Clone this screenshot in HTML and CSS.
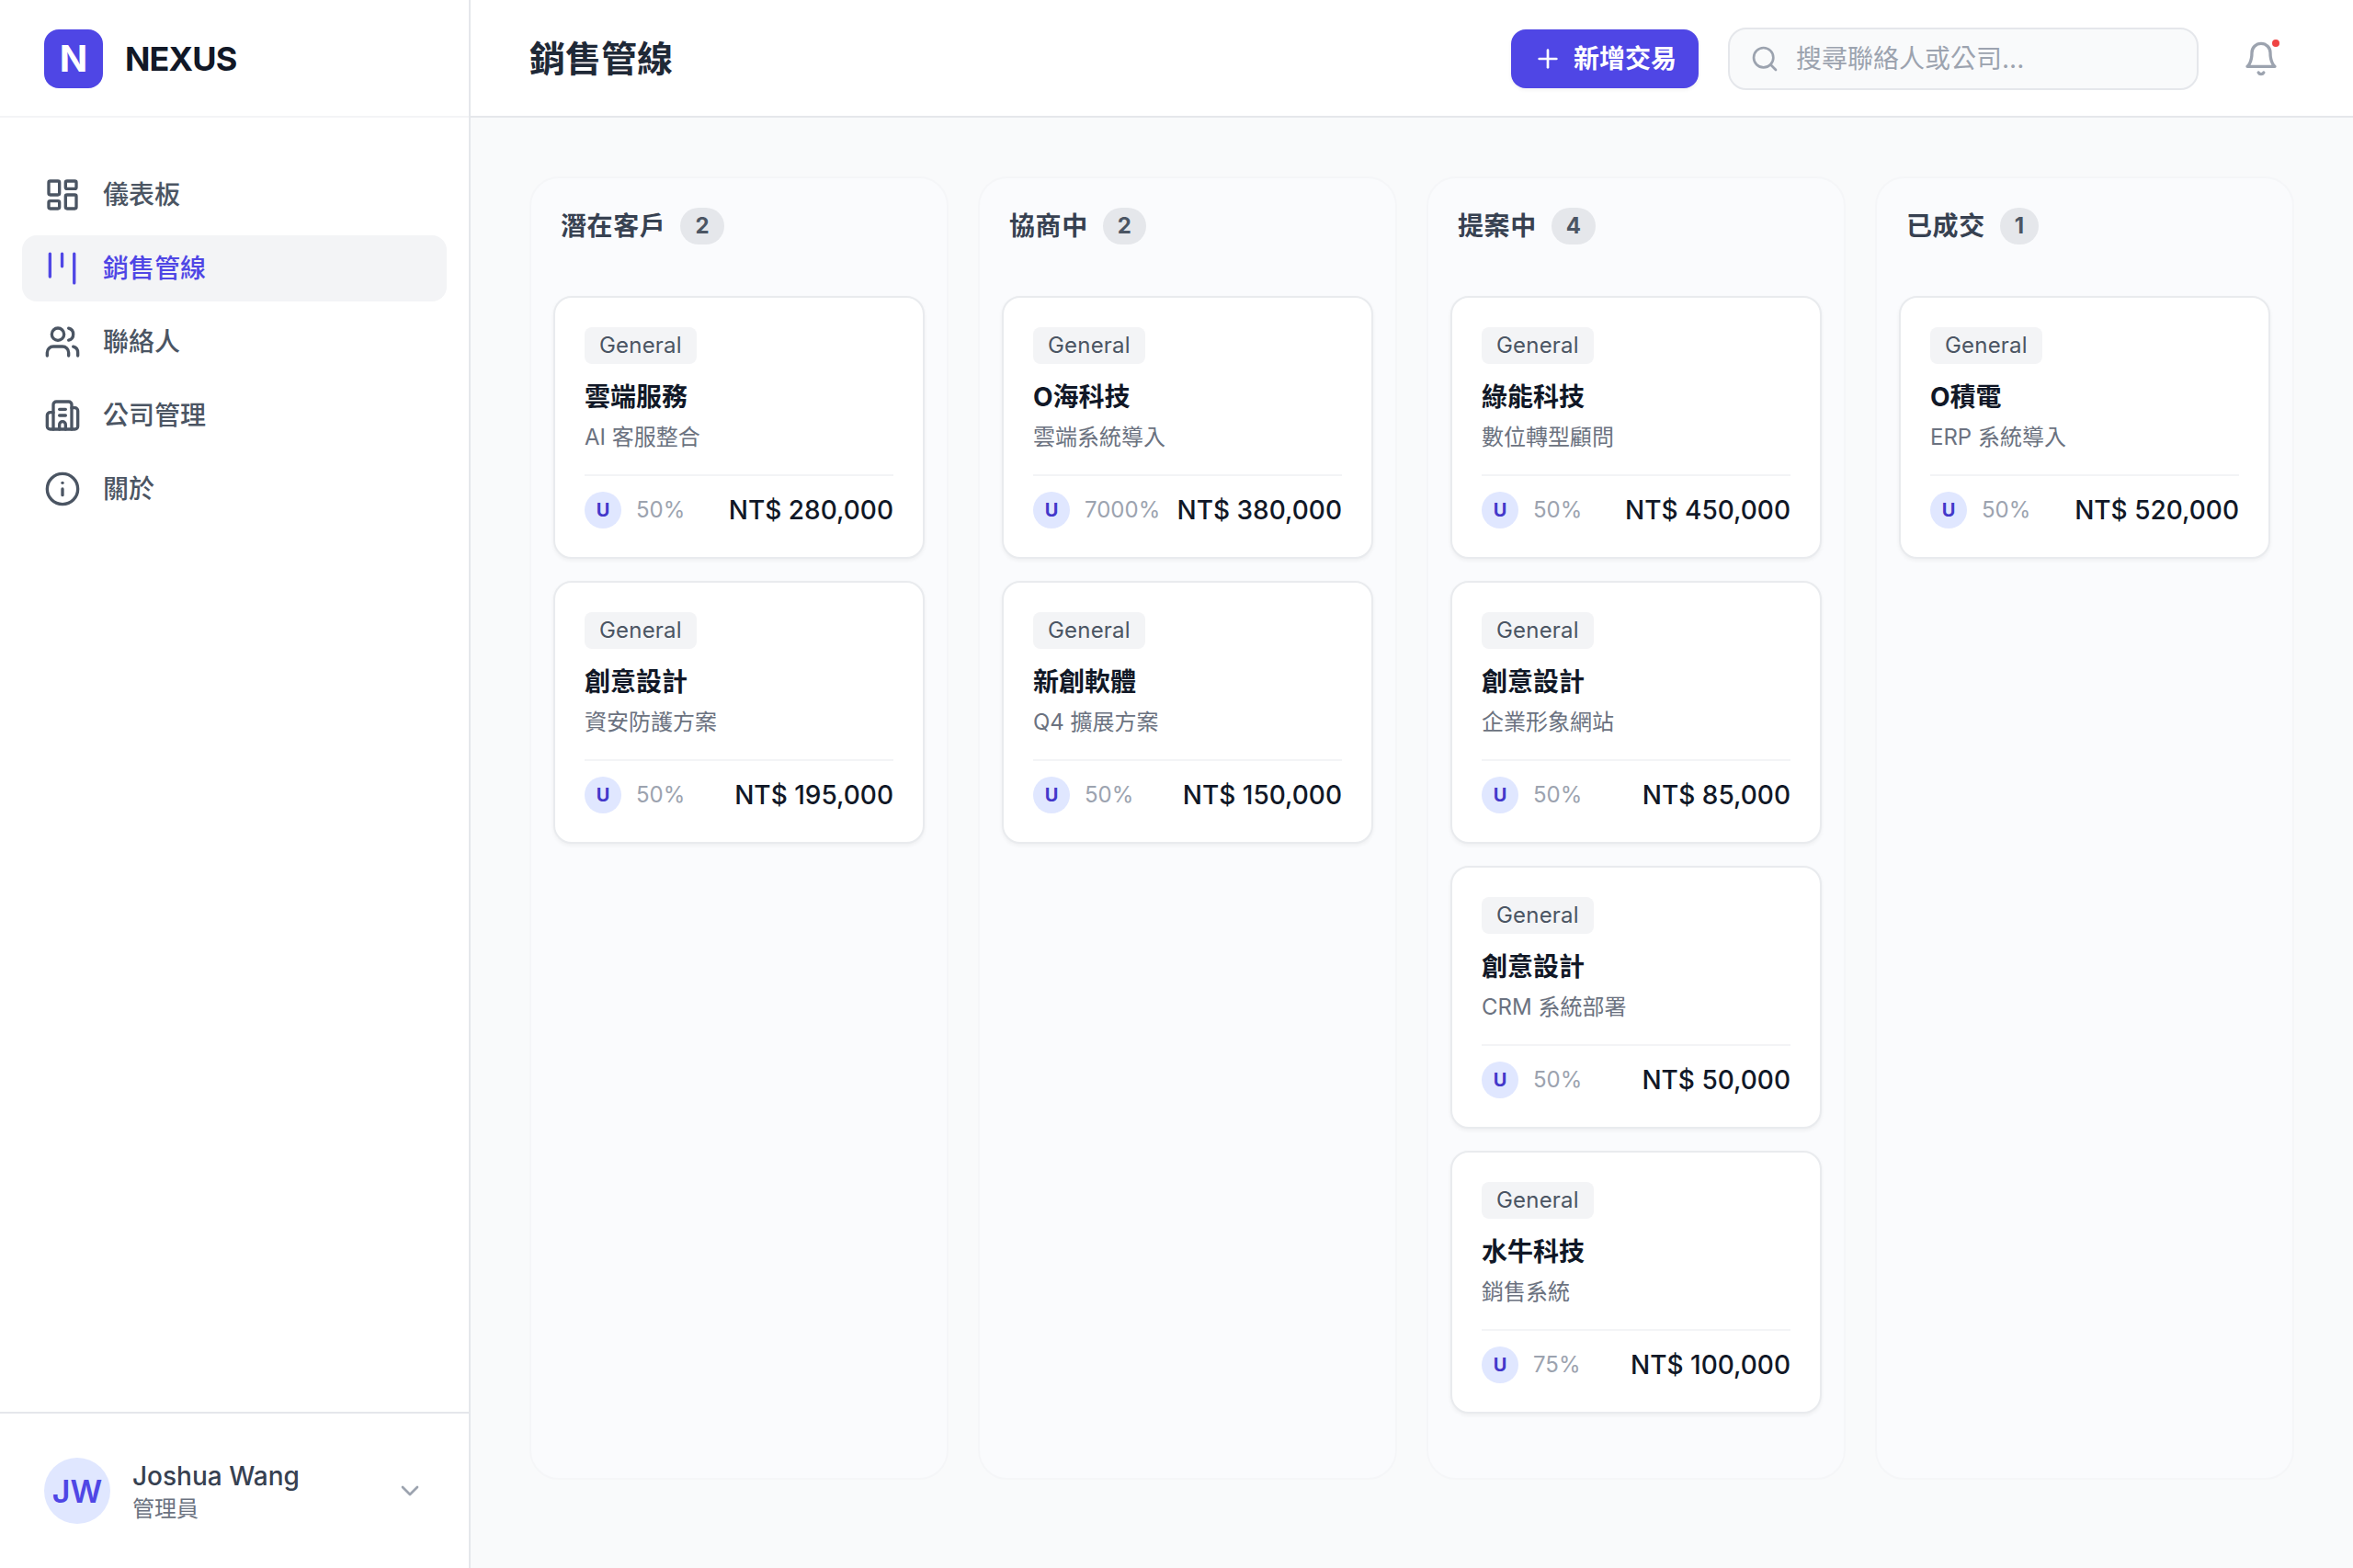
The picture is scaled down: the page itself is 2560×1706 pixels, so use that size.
FILE: index.html
```html
<!DOCTYPE html>
<html lang="zh-Hant">
<head>
<meta charset="utf-8">
<title>銷售管線</title>
<link rel="stylesheet" href="styles.css">
</head>
<body>
<div class="app">
  <aside class="sidebar">
    <div class="brand"><div class="logo">N</div><span class="brand-name">NEXUS</span></div>
    <nav class="nav">
      <a class="nav-item"><svg class="icon" viewBox="0 0 24 24"><rect width="7" height="9" x="3" y="3" rx="1"/><rect width="7" height="5" x="14" y="3" rx="1"/><rect width="7" height="9" x="14" y="12" rx="1"/><rect width="7" height="5" x="3" y="16" rx="1"/></svg><span>儀表板</span></a>
      <a class="nav-item active"><svg class="icon icon-kanban" viewBox="3.2 3.2 17.6 17.6"><path d="M6 5v11"/><path d="M11.8 5v6"/><path d="M17.6 5v14"/></svg><span>銷售管線</span></a>
      <a class="nav-item"><svg class="icon" viewBox="0 0 24 24"><path d="M16 21v-2a4 4 0 0 0-4-4H6a4 4 0 0 0-4 4v2"/><circle cx="9" cy="7" r="4"/><path d="M22 21v-2a4 4 0 0 0-3-3.87"/><path d="M16 3.13a4 4 0 0 1 0 7.75"/></svg><span>聯絡人</span></a>
      <a class="nav-item"><svg class="icon" viewBox="0 0 24 24"><path d="M10 12h4"/><path d="M10 8h4"/><path d="M14 21v-3a2 2 0 0 0-4 0v3"/><path d="M6 10H4a2 2 0 0 0-2 2v7a2 2 0 0 0 2 2h16a2 2 0 0 0 2-2V9a2 2 0 0 0-2-2h-2"/><path d="M6 21V5a2 2 0 0 1 2-2h8a2 2 0 0 1 2 2v16"/></svg><span>公司管理</span></a>
      <a class="nav-item"><svg class="icon" viewBox="0 0 24 24"><circle cx="12" cy="12" r="10"/><path d="M12 16v-4"/><path d="M12 8h.01"/></svg><span>關於</span></a>
    </nav>
    <div class="user">
      <div class="user-avatar">JW</div>
      <div class="user-info"><div class="user-name">Joshua Wang</div><div class="user-role">管理員</div></div>
      <svg class="chevron" viewBox="0 0 24 24"><path d="m6 9 6 6 6-6"/></svg>
    </div>
  </aside>
  <div class="content">
    <header class="topbar">
      <h1 class="page-title">銷售管線</h1>
      <button class="add-btn"><svg class="plus" viewBox="0 0 24 24"><path d="M5 12h14"/><path d="M12 5v14"/></svg><span>新增交易</span></button>
      <div class="search"><svg class="search-icon" viewBox="0 0 24 24"><circle cx="11" cy="11" r="8"/><path d="m21 21-4.3-4.3"/></svg><span>搜尋聯絡人或公司...</span></div>
      <div class="bell"><svg class="bell-icon" viewBox="0 0 24 24"><path d="M6 8a6 6 0 0 1 12 0c0 7 3 9 3 9H3s3-2 3-9"/><path d="M10.3 21a1.94 1.94 0 0 0 3.4 0"/></svg><i class="bell-dot"></i></div>
    </header>
    <main class="board">
      <section class="column">
        <div class="col-head"><h2>潛在客戶</h2><span class="count">2</span></div>
        <article class="card"><span class="tag">General</span><h3>雲端服務</h3><p>AI 客服整合</p><div class="foot"><span class="av">U</span><span class="pct">50%</span><span class="price">NT$ 280,000</span></div></article>
        <article class="card"><span class="tag">General</span><h3>創意設計</h3><p>資安防護方案</p><div class="foot"><span class="av">U</span><span class="pct">50%</span><span class="price">NT$ 195,000</span></div></article>
      </section>
      <section class="column">
        <div class="col-head"><h2>協商中</h2><span class="count">2</span></div>
        <article class="card"><span class="tag">General</span><h3>O海科技</h3><p>雲端系統導入</p><div class="foot"><span class="av">U</span><span class="pct">7000%</span><span class="price">NT$ 380,000</span></div></article>
        <article class="card"><span class="tag">General</span><h3>新創軟體</h3><p>Q4 擴展方案</p><div class="foot"><span class="av">U</span><span class="pct">50%</span><span class="price">NT$ 150,000</span></div></article>
      </section>
      <section class="column">
        <div class="col-head"><h2>提案中</h2><span class="count">4</span></div>
        <article class="card"><span class="tag">General</span><h3>綠能科技</h3><p>數位轉型顧問</p><div class="foot"><span class="av">U</span><span class="pct">50%</span><span class="price">NT$ 450,000</span></div></article>
        <article class="card"><span class="tag">General</span><h3>創意設計</h3><p>企業形象網站</p><div class="foot"><span class="av">U</span><span class="pct">50%</span><span class="price">NT$ 85,000</span></div></article>
        <article class="card"><span class="tag">General</span><h3>創意設計</h3><p>CRM 系統部署</p><div class="foot"><span class="av">U</span><span class="pct">50%</span><span class="price">NT$ 50,000</span></div></article>
        <article class="card"><span class="tag">General</span><h3>水牛科技</h3><p>銷售系統</p><div class="foot"><span class="av">U</span><span class="pct">75%</span><span class="price">NT$ 100,000</span></div></article>
      </section>
      <section class="column">
        <div class="col-head"><h2>已成交</h2><span class="count">1</span></div>
        <article class="card"><span class="tag">General</span><h3>O積電</h3><p>ERP 系統導入</p><div class="foot"><span class="av">U</span><span class="pct">50%</span><span class="price">NT$ 520,000</span></div></article>
      </section>
    </main>
  </div>
</div>
</body>
</html>
```
FILE: styles.css
```css
* { box-sizing: border-box; }
html, body { margin: 0; height: 100%; }
body {
  font-family: Inter, "Noto Sans CJK TC", sans-serif;
  line-height: 1.5;
  color: #111827;
  background: #f9fafb;
}
svg { fill: none; stroke: currentColor; stroke-width: 2; stroke-linecap: round; stroke-linejoin: round; flex: none; display: block; }
h1, h2, h3, p { margin: 0; }

.app { display: flex; height: 1706px; overflow: hidden; }

.sidebar { width: 512px; flex: none; display: flex; flex-direction: column; background: #fff; border-right: 2px solid #e5e7eb; }
.brand { height: 128px; flex: none; display: flex; align-items: center; gap: 24px; padding: 2px 48px 0; border-bottom: 2px solid #f3f4f6; }
.logo { width: 64px; height: 64px; border-radius: 16px; background: #4f46e5; color: #fff; font-size: 40px; font-weight: 700; display: flex; align-items: center; justify-content: center; }
.brand-name { font-size: 36px; font-weight: 700; letter-spacing: -0.9px; color: #111827; }

.nav { flex: 1; display: flex; flex-direction: column; gap: 8px; padding: 48px 24px 0; }
.nav-item { height: 72px; display: flex; align-items: center; gap: 24px; padding: 0 24px; border-radius: 16px; font-size: 28px; font-weight: 500; color: #4b5563; }
.nav-item.active { background: #f3f4f6; color: #4f46e5; }
.icon { width: 40px; height: 40px; }
.icon-kanban { stroke-width: 1.47; }

.user { height: 170px; flex: none; display: flex; align-items: center; padding: 0 48px; gap: 24px; border-top: 2px solid #e5e7eb; }
.user-avatar { width: 72px; height: 72px; border-radius: 50%; background: #e0e7ff; color: #4f46e5; font-size: 34px; font-weight: 600; display: flex; align-items: center; justify-content: center; flex: none; }
.user-info { flex: 1; min-width: 0; }
.user-name { font-size: 28px; line-height: 36px; font-weight: 500; color: #374151; }
.user-role { margin-top: 2px; margin-bottom: -2px; font-size: 24px; line-height: 32px; color: #6b7280; }
.chevron { width: 32px; height: 32px; color: #9ca3af; }

.content { flex: 1; min-width: 0; display: flex; flex-direction: column; }
.topbar { height: 128px; flex: none; display: flex; align-items: center; padding: 2px 64px 0; gap: 32px; background: #fff; border-bottom: 2px solid #e5e7eb; }
.page-title { flex: 1; font-size: 39px; font-weight: 700; color: #1f2937; }
.add-btn { height: 64px; display: flex; align-items: center; gap: 12px; padding: 0 24px; border: 0; border-radius: 16px; background: #4f46e5; color: #fff; font: 600 28px/1.5 Inter, "Noto Sans CJK TC", sans-serif; box-shadow: 0 2px 4px rgba(0,0,0,.05); }
.plus { width: 32px; height: 32px; }
.search { width: 512px; height: 68px; display: flex; align-items: center; gap: 18px; padding: 0 22px; background: #f9fafb; border: 2px solid #e5e7eb; border-radius: 20px; font-size: 28px; color: #9ca3af; }
.search-icon { width: 32px; height: 32px; color: #9ca3af; }
.bell { position: relative; padding: 16px; color: #9ca3af; }
.bell-icon { width: 40px; height: 40px; }
.bell-dot { position: absolute; top: 15px; right: 16px; width: 8px; height: 8px; border-radius: 50%; background: #ef4444; }

.board { flex: 1; min-height: 0; display: grid; grid-template-columns: repeat(4, 1fr); gap: 32px; padding: 64px 64px 96px; }
.column { display: flex; flex-direction: column; gap: 24px; padding: 32px 24px; background: #fafbfd; border: 2px solid #f5f6f8; border-radius: 32px; }
.col-head { height: 40px; display: flex; align-items: center; gap: 16px; padding: 0 8px; margin-bottom: 32px; }
.col-head h2 { font-size: 28px; font-weight: 700; letter-spacing: .6px; color: #374151; }
.count { height: 40px; padding: 0 16px; border-radius: 20px; background: #e5e7eb; color: #4b5563; font-size: 24px; font-weight: 700; display: flex; align-items: center; justify-content: center; }

.card { display: flex; flex-direction: column; align-items: flex-start; height: 286px; padding: 32px; background: #fff; border: 2px solid #e9ebee; border-radius: 20px; box-shadow: 0 2px 4px rgba(0,0,0,.05); }
.tag { height: 40px; padding: 0 16px; border-radius: 8px; background: #f3f4f6; color: #4b5563; font-size: 24px; line-height: 40px; letter-spacing: .2px; }
.card h3 { margin-top: 16px; font-size: 28px; line-height: 40px; font-weight: 700; color: #111827; }
.card p { margin-top: 5px; margin-bottom: 21px; font-size: 24px; line-height: 38px; color: #6b7280; }
.foot { width: 100%; display: flex; align-items: center; padding-top: 16px; border-top: 2px solid #f3f4f6; }
.av { width: 40px; height: 40px; border-radius: 50%; background: #e0e7ff; color: #4338ca; font-size: 20px; font-weight: 700; display: flex; align-items: center; justify-content: center; flex: none; }
.pct { margin-left: 16px; font-size: 24px; color: #9ca3af; }
.price { margin-left: auto; font-size: 28px; font-weight: 500; color: #111827; }
```
